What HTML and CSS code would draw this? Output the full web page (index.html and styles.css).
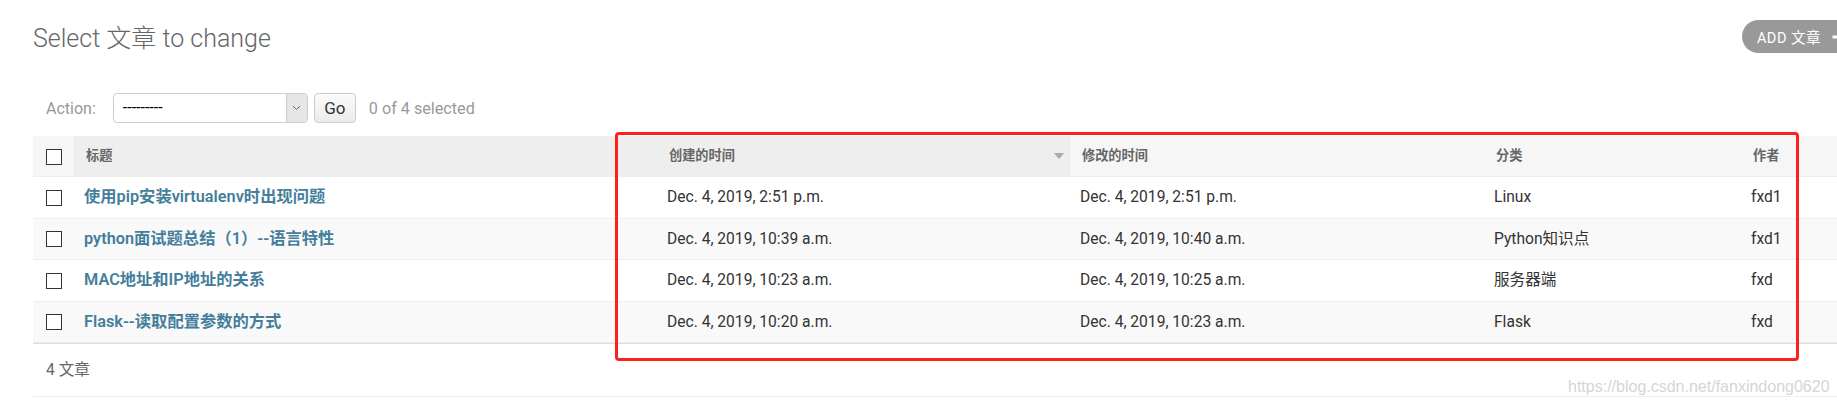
FILE: index.html
```html
<!DOCTYPE html>
<html lang="zh-CN">
<head>
    <meta charset="UTF-8">
    <meta name="viewport" content="width=device-width, initial-scale=1.0">
    <title>Select 文章 to change</title>
    <link rel="stylesheet" href="styles.css">
</head>
<body>

<div class="page">
    <div class="content">
        <div class="page-head">
            <h1>Select 文章 to change</h1>
            <a class="addlink" href="#">ADD 文章
                <svg width="16" height="16" viewBox="0 0 16 16"><path d="M6.4 1.5h3.2v4.9h4.9v3.2H9.6v4.9H6.4V9.6H1.5V6.4h4.9z" fill="#fff"/></svg>
            </a>
        </div>

        <div class="actions">
            <label>Action:</label>
            <div class="select-box">
                <span class="select-value">---------</span>
                <span class="select-arrow">
                    <svg width="9" height="6" viewBox="0 0 9 6"><path d="M1 1l3.5 3.5L8 1" fill="none" stroke="#666" stroke-width="1"/></svg>
                </span>
            </div>
            <button class="go" type="button">Go</button>
            <span class="counter">0 of 4 selected</span>
        </div>

        <table class="result-list">
            <colgroup>
                <col style="width:41px">
                <col style="width:583px">
                <col style="width:413px">
                <col style="width:414px">
                <col style="width:257px">
                <col>
            </colgroup>
            <thead>
                <tr>
                    <th class="action-checkbox"><input type="checkbox"></th>
                    <th class="sorted">标题</th>
                    <th class="sorted sort-desc">
                        <div class="th-inner">
                            <span>创建的时间</span>
                            <svg class="sort-icon" width="10" height="6" viewBox="0 0 10 6"><path d="M0 0h10L5 6z" fill="#aaa"/></svg>
                        </div>
                    </th>
                    <th>修改的时间</th>
                    <th>分类</th>
                    <th>作者</th>
                </tr>
            </thead>
            <tbody>
                <tr>
                    <td class="action-checkbox"><input type="checkbox"></td>
                    <td class="field-title"><a href="#">使用pip安装virtualenv时出现问题</a></td>
                    <td>Dec. 4, 2019, 2:51 p.m.</td>
                    <td>Dec. 4, 2019, 2:51 p.m.</td>
                    <td>Linux</td>
                    <td>fxd1</td>
                </tr>
                <tr>
                    <td class="action-checkbox"><input type="checkbox"></td>
                    <td class="field-title"><a href="#">python面试题总结（1）--语言特性</a></td>
                    <td>Dec. 4, 2019, 10:39 a.m.</td>
                    <td>Dec. 4, 2019, 10:40 a.m.</td>
                    <td>Python知识点</td>
                    <td>fxd1</td>
                </tr>
                <tr>
                    <td class="action-checkbox"><input type="checkbox"></td>
                    <td class="field-title"><a href="#">MAC地址和IP地址的关系</a></td>
                    <td>Dec. 4, 2019, 10:23 a.m.</td>
                    <td>Dec. 4, 2019, 10:25 a.m.</td>
                    <td>服务器端</td>
                    <td>fxd</td>
                </tr>
                <tr>
                    <td class="action-checkbox"><input type="checkbox"></td>
                    <td class="field-title"><a href="#">Flask--读取配置参数的方式</a></td>
                    <td>Dec. 4, 2019, 10:20 a.m.</td>
                    <td>Dec. 4, 2019, 10:23 a.m.</td>
                    <td>Flask</td>
                    <td>fxd</td>
                </tr>
            </tbody>
        </table>

        <p class="paginator">4 文章</p>
    </div>

    <div class="mark-box"></div>
    <div class="watermark">https://blog.csdn.net/fanxindong0620</div>
</div>

</body>
</html>
```

FILE: styles.css
```css
body { margin: 0; background: #fff; color: #333; font-family: Roboto, "Noto Sans CJK SC", sans-serif; overflow: hidden; }
.page { position: relative; width: 1837px; height: 406px; overflow: hidden; }
.content { width: 1823px; margin-left: 33px; padding-top: 20px; }

/* header */
.page-head { display: flex; justify-content: space-between; align-items: flex-start; }
h1 { margin: 4px 0 0; font-size: 25px; font-weight: 300; line-height: 30px; color: #666; }
.addlink { display: flex; align-items: center; height: 33px; padding: 0 9px 0 15px; border-radius: 17px; background: #999; color: #fff; font-size: 14.5px; letter-spacing: 0.5px; text-decoration: none; }
.addlink svg { margin-left: 10px; }

/* actions bar */
.actions { display: flex; align-items: center; height: 30px; margin-top: 39px; padding-left: 13px; font-size: 16px; }
.actions label { color: #999; margin-right: 17px; }
.select-box { display: flex; width: 195px; height: 30px; box-sizing: border-box; border: 1px solid #ccc; border-radius: 4px; background: #fff; }
.select-value { flex: 1; padding-left: 9px; line-height: 28px; font-size: 16px; color: #000; }
.select-arrow { display: flex; align-items: center; justify-content: center; width: 20px; background: #e6e6e6; border-left: 1px solid #ccc; border-radius: 0 3px 3px 0; }
.go { width: 42px; height: 30px; margin-left: 6px; padding: 0; border: 1px solid #ccc; border-radius: 4px; background: linear-gradient(#fbfbfb, #ebebeb); font: inherit; font-size: 17px; color: #333; }
.counter { margin-left: 13px; color: #999; font-size: 16.2px; }

/* result table */
.result-list { width: 100%; margin-top: 13px; border-collapse: collapse; table-layout: fixed; }
.result-list th { padding: 10px 12px; line-height: 20px; text-align: left; font-size: 13.2px; font-weight: 600; color: #666; background: #f6f6f6; border-bottom: 1px solid #eee; white-space: nowrap; }
.result-list th.sorted { background: #eee; }
.result-list th.sort-desc { padding-right: 6px; }
.th-inner { display: flex; align-items: center; justify-content: space-between; }
.result-list td { padding: 10px; line-height: 20.5px; font-size: 15.6px; border-bottom: 1px solid #eee; white-space: nowrap; }
.result-list tbody tr:nth-child(even) td { background: #f9f9f9; }
.result-list .action-checkbox { padding-left: 13px; padding-right: 0; }
.field-title a { color: #447e9b; font-size: 16.3px; font-weight: 600; text-decoration: none; }
input[type=checkbox] { appearance: none; width: 16px; height: 16px; margin: 0; border: 1px solid #333; background: #fff; vertical-align: middle; }

.paginator { margin: 0; padding: 12px 13px; line-height: 28px; font-size: 15.6px; color: #666; border-top: 1px solid #ddd; border-bottom: 1px solid #eee; }

/* screenshot annotations */
.mark-box { position: absolute; left: 615px; top: 132px; width: 1184px; height: 229px; box-sizing: border-box; border: 3px solid #ff1f1f; border-radius: 4px; }
.watermark { position: absolute; left: 1568px; top: 378px; font-family: "Liberation Sans", Arial, sans-serif; font-size: 16px; line-height: 18px; color: #d5d5d5; white-space: nowrap; }
```
